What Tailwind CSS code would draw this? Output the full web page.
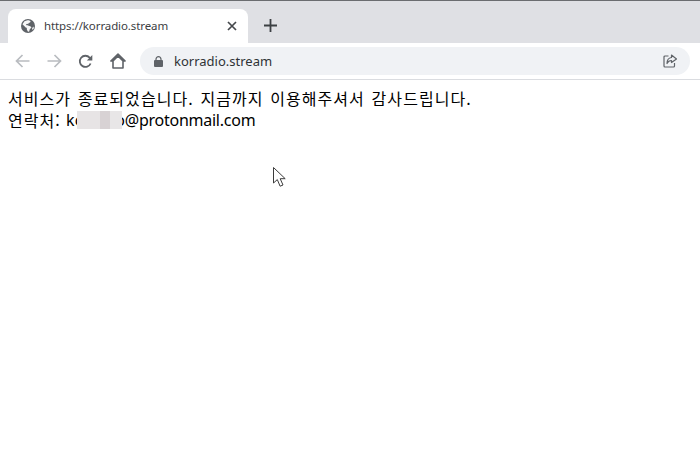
<!DOCTYPE html>
<html lang="ko">
<head>
<meta charset="utf-8">
<script src="https://cdn.jsdelivr.net/npm/@tailwindcss/browser@4"></script>
</head>
<body class="w-[700px] h-[467px] overflow-hidden bg-white relative font-['Noto_Sans','Noto_Sans_CJK_KR',sans-serif]">
  <div class="h-[1px] bg-[#6b6d70]"></div>
  <div class="h-[42px] bg-[#dfe0e4] flex items-end pl-2">
    <div class="relative w-[240px] h-[34px] bg-white rounded-t-[8px] flex items-center pl-[13px] pr-[11px] gap-[9px]">
      <svg class="w-[14px] h-[14px] shrink-0" viewBox="0 0 24 24"><circle cx="12" cy="12" r="12" fill="#5f6368"/><path d="M11 2 6 4 2.500 9l6 6 1.500 0 0 3 2 4 2-.5 1-4 3-3-2-2-3-1-1.500-1-2 0-1-1 2-1.500 2 1 .5-2 2.500-1 1-2-3-2z" fill="#fff" opacity=".95"/><path d="m19 16 2.500-3 .5 3-2 3z" fill="#fff"/></svg>
      <span class="text-[11.5px] tracking-[-0.1px] leading-none text-[#3c4043] whitespace-nowrap flex-1">https://korradio.stream</span>
      <svg class="w-[10px] h-[10px] shrink-0" viewBox="0 0 10 10"><path d="M1 1l8 8M9 1l-8 8" stroke="#45484c" stroke-width="1.700"/></svg>
    </div>
    <div class="self-center mt-[7px] ml-[16px]">
      <svg class="w-[13px] h-[13px] block" viewBox="0 0 13 13"><path d="M6.500 0v13M0 6.500h13" stroke="#3c4043" stroke-width="1.800"/></svg>
    </div>
  </div>
  <div class="h-[37px] border-b border-[#dadce0] flex items-center pl-[15px] pr-[10px]">
    <svg class="w-[15px] h-[14px] shrink-0" viewBox="0 0 15 14"><path d="M14.500 7H1.500M7.500 1 1.500 7l6 6" fill="none" stroke="#b9bcc0" stroke-width="1.700"/></svg>
    <svg class="w-[15px] h-[14px] shrink-0 ml-[17px]" viewBox="0 0 15 14"><path d="M.5 7h13M7.500 1l6 6-6 6" fill="none" stroke="#b9bcc0" stroke-width="1.700"/></svg>
    <svg class="w-[15px] h-[15px] shrink-0 ml-[16px]" viewBox="0 0 15 15"><path d="M12.600 9.500A5.600 5.600 0 1 1 11.600 3.600L13 5" fill="none" stroke="#5f6368" stroke-width="1.800"/><path d="M14.300 1v5.500H8.800z" fill="#5f6368"/></svg>
    <svg class="w-[16px] h-[16px] shrink-0 ml-[17px]" viewBox="0 0 16 16"><path d="M8 1 .9 8H3v7h10V8h2.100zM3 8l5-5 5 5" fill="none" stroke="#5f6368" stroke-width="1.600" stroke-linejoin="round"/></svg>
    <div class="ml-[14px] flex-1 h-[28px] rounded-full bg-[#f0f2f5] flex items-center pl-[14px] pr-[13px]">
      <svg class="w-[9px] h-[11px] shrink-0" viewBox="0 0 9 11"><path d="M2 5V3.200a2.500 2.500 0 0 1 5 0V5" fill="none" stroke="#5f6368" stroke-width="1.200"/><rect y="4" width="9" height="7" rx="1" fill="#5f6368"/></svg>
      <span class="ml-[11px] text-[13px] leading-none text-[#2f3236] flex-1">korradio.stream</span>
      <svg class="w-[14px] h-[14px] shrink-0" viewBox="0 0 14 14"><path d="M5.500 2H2a1 1 0 0 0-1 1v9a1 1 0 0 0 1 1h8.500a1 1 0 0 0 1-1V9" fill="none" stroke="#5f6368" stroke-width="1.200"/><path d="M8.500 1 13.500 5 8.500 8.500V6.500C6.500 6.500 5 7.500 4 9.500 4 6 6 3.800 8.500 3.500z" fill="none" stroke="#5f6368" stroke-width="1.200" stroke-linejoin="round"/></svg>
    </div>
  </div>
  <div class="pt-[7px] pl-2 text-[16px] leading-[22px] text-black font-['Noto_Sans','Noto_Sans_CJK_KR',sans-serif] whitespace-nowrap">
    <p class="font-['Noto_Sans_CJK_KR',sans-serif] tracking-[1.05px] [word-spacing:1.2px]">서비스가 종료되었습니다. 지금까지 이용해주셔서 감사드립니다.</p>
    <p class="flex">
      <span class="font-['Noto_Sans_CJK_KR',sans-serif] tracking-[1px]">연락처:&nbsp;</span><span>k</span><span class="relative">c<span class="absolute left-[2px] top-[2px] h-[18px] w-[45px] flex"><span class="w-[23px] bg-[#e7e4e5]"></span><span class="w-[10px] bg-[#d8d2d4]"></span><span class="w-[12px] bg-[#e8e6e7]"></span></span></span><span class="w-[33px]"></span><span class="tracking-[-0.25px]">o@protonmail.com</span>
    </p>
  </div>
  <svg class="absolute left-[272px] top-[166px] w-[15px] h-[22px]" viewBox="0 0 15 22"><path d="M1.500 1.500v15.500l3.800-3.400 2.800 6.600 2.900-1.200-2.800-6.300h5z" fill="#fff" stroke="#3c3c3c" stroke-width="1"/></svg>
</body>
</html>
